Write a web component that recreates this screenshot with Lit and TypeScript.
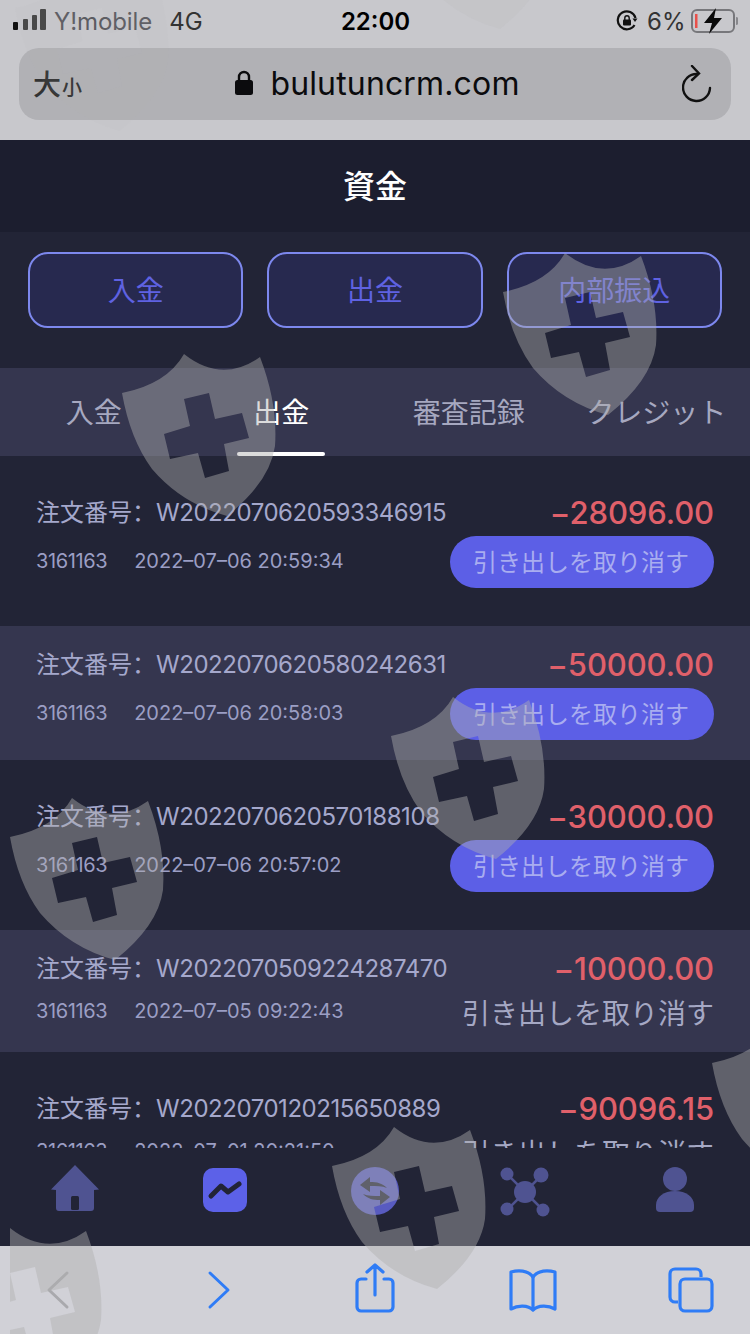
import { LitElement, css, html, svg } from "lit";

type Row = { no: string; time: string; amount: string; action: "button" | "text" };

const rows: Row[] = [
  { no: "W2022070620593346915", time: "2022–07–06 20:59:34", amount: "−28096.00", action: "button" },
  { no: "W2022070620580242631", time: "2022–07–06 20:58:03", amount: "−50000.00", action: "button" },
  { no: "W2022070620570188108", time: "2022–07–06 20:57:02", amount: "−30000.00", action: "button" },
  { no: "W2022070509224287470", time: "2022–07–05 09:22:43", amount: "−10000.00", action: "text" },
  { no: "W2022070120215650889", time: "2022–07–01 20:21:50", amount: "−90096.15", action: "text" },
];

const SHIELD =
  "M0 39Q45 30 62 0Q100 30 138 3Q156 50 153 92Q148 128 105 162Q60 150 30 115Q8 85 0 39Z" +
  "M62 45L87 39L93 65L120 59L127 84L102 90L107 117L83 124L76 99L48 105L42 80L68 72Z";

// watermark stamps: x, y, opacity
const stamps: [number, number, number][] = [
  [15, -31, 0.12],
  [395, -133, 0.25],
  [122, 354, 1],
  [503, 253, 1],
  [391, 697, 1],
  [10, 798, 1],
  [712, 1024, 1],
  [332, 1127, 1],
];

export class AppRoot extends LitElement {
  static styles = css`
    :host {
      display: block;
      position: relative;
      width: 750px;
      height: 1334px;
      overflow: hidden;
      background: #222436;
      font-family: "Inter", "Noto Sans CJK JP", sans-serif;
    }

    .page {
      display: flex;
      flex-direction: column;
      height: 100%;
    }

    /* browser chrome */
    .chrome {
      flex: none;
      height: 140px;
      box-sizing: border-box;
      background: #c8c8cc;
      padding: 0 19px;
    }

    .status {
      display: grid;
      grid-template-columns: 1fr auto 1fr;
      align-items: center;
      height: 42px;
      margin: 0 -7px 6px -6px;
      font-size: 24px;
      color: #333;
    }

    .status-left,
    .status-right {
      display: flex;
      align-items: center;
    }

    .status-right {
      justify-content: flex-end;
    }

    .carrier {
      margin-left: 7px;
      letter-spacing: -0.1px;
      color: #5c5c62;
    }

    .net {
      margin-left: 17px;
    }

    .clock {
      font-weight: 600;
      color: #000;
    }

    .pct {
      margin: 0 5px 0 9px;
      letter-spacing: 0.3px;
    }

    .url {
      display: grid;
      grid-template-columns: 1fr auto 1fr;
      align-items: center;
      height: 72px;
      padding: 0 19px 0 14px;
      border-radius: 20px;
      background: #b1b1b5;
    }

    .aa {
      color: #333;
      font-size: 28px;
      font-weight: 500;
      padding-bottom: 3px;
    }

    .aa small {
      font-size: 20px;
      margin-left: 1px;
    }

    .domain {
      display: flex;
      align-items: center;
      gap: 16px;
      margin-left: 9px;
      padding-bottom: 2px;
      font-size: 32px;
      letter-spacing: 0.15px;
      color: #0b0b0d;
    }

    .reload {
      justify-self: end;
    }

    /* app */
    .title {
      flex: none;
      height: 92px;
      box-sizing: border-box;
      padding-bottom: 5px;
      display: grid;
      place-items: center;
      background: #1c1e2f;
      color: #fff;
      font-size: 32px;
      font-weight: 500;
    }

    .actions {
      flex: none;
      display: grid;
      grid-template-columns: repeat(3, 1fr);
      gap: 24px;
      padding: 20px 28px 40px;
    }

    .action {
      height: 76px;
      box-sizing: border-box;
      padding-bottom: 2px;
      display: grid;
      place-items: center;
      border: 2px solid #7d88ee;
      border-radius: 20px;
      background: #27294f;
      color: #5f62e2;
      font-size: 28px;
    }

    .tabs {
      flex: none;
      display: grid;
      grid-template-columns: repeat(4, 1fr);
      height: 88px;
      background: #35364f;
    }

    .tab {
      position: relative;
      box-sizing: border-box;
      padding-bottom: 3px;
      display: grid;
      place-items: center;
      font-size: 28px;
      color: #a6a8c0;
      white-space: nowrap;
    }

    .tab.on {
      color: #fff;
    }

    .tab.on::after {
      content: "";
      position: absolute;
      left: 50%;
      bottom: 0;
      width: 88px;
      height: 4px;
      margin-left: -44px;
      border-radius: 2px;
      background: #fff;
    }

    .list {
      flex: 1;
      min-height: 0;
      overflow: hidden;
    }

    .row {
      display: grid;
      grid-template-columns: 1fr auto;
      grid-template-rows: 36px auto;
      row-gap: 6px;
      align-items: center;
      padding: 38px 36px 38px 36px;
    }

    .row:nth-child(even) {
      padding-top: 20px;
      padding-bottom: 20px;
      background: #35364f;
    }

    .order {
      display: flex;
      align-items: baseline;
      padding-bottom: 4px;
      font-size: 24px;
      color: #a5a8cc;
      white-space: nowrap;
    }

    .order .colon {
      font-family: "Noto Sans CJK SC", sans-serif;
    }

    .order .no {
      letter-spacing: -0.45px;
    }

    .amount {
      justify-self: end;
      font-size: 31px;
      font-weight: 500;
      letter-spacing: -0.1px;
      color: #e0606a;
    }

    .meta {
      display: flex;
      gap: 27px;
      padding-bottom: 2px;
      font-size: 20px;
      color: #9b9ec4;
    }

    .meta .id {
      letter-spacing: -0.4px;
    }

    .cancel {
      justify-self: end;
      height: 52px;
      width: 264px;
      box-sizing: border-box;
      padding: 0 2px 4px 0;
      display: grid;
      place-items: center;
      border-radius: 26px;
      background: #5c5fe6;
      color: #a9adf0;
      font-size: 24px;
    }

    .cancel.plain {
      height: 40px;
      width: auto;
      padding: 0 0 3px;
      background: none;
      color: #a5a8c4;
      font-size: 28px;
    }

    .nav {
      flex: none;
      height: 98px;
      display: grid;
      grid-template-columns: repeat(5, 150px);
      justify-items: center;
      padding-top: 16px;
      box-sizing: border-box;
      background: #222436;
    }

    .nav .raised {
      margin-top: 3px;
    }

    .toolbar {
      flex: none;
      height: 88px;
      display: flex;
      align-items: center;
      gap: 114.25px;
      padding-left: 36px;
      background: #d1d1d7;
    }

    .tool {
      width: 44px;
      display: grid;
      grid-template-columns: 44px;
      place-items: center;
    }

    .tool .share {
      margin-top: -4px;
    }

    .marks {
      position: absolute;
      inset: 0;
      pointer-events: none;
    }
  `;

  private renderStatus() {
    return html`
      <div class="status">
        <div class="status-left">
          <svg width="34" height="24" viewBox="0 0 34 24">
            <rect x="0" y="13" width="5" height="8" rx="1" fill="#111" />
            <rect x="10" y="10" width="5" height="11" rx="1" fill="#444" />
            <rect x="19" y="6" width="5" height="15" rx="1" fill="#444" />
            <rect x="27" y="0" width="6" height="21" rx="1" fill="#444" />
          </svg>
          <span class="carrier">Y!mobile</span>
          <span class="net">4G</span>
        </div>
        <div class="clock">22:00</div>
        <div class="status-right">
          <svg width="22" height="22" viewBox="0 0 22 22" fill="none" stroke="#111" stroke-width="2.2">
            <path d="M18.5 15A9 9 0 1 1 19.5 8" />
            <path d="M16.5 8.5h5l-2.5 3.5z" fill="#111" stroke="none" />
            <rect x="7" y="9.5" width="8" height="6" rx="1" fill="#111" stroke="none" />
            <path d="M8.8 10V8a2.2 2.2 0 0 1 4.4 0v2" stroke-width="1.4" />
          </svg>
          <span class="pct">6%</span>
          <svg width="47" height="26" viewBox="0 0 47 26" fill="none">
            <rect x="1" y="2" width="42" height="22" rx="5" stroke="#77777b" stroke-width="2" />
            <rect x="4" y="6" width="2.5" height="14" fill="#e8504a" />
            <path d="M45 9a3 4 0 0 1 0 8z" fill="#88888c" />
            <path d="M25 0L13 15h8l-3 11 13-16h-8z" fill="#0a0a0a" />
          </svg>
        </div>
      </div>
    `;
  }

  private renderUrl() {
    return html`
      <div class="url">
        <div class="aa">大<small>小</small></div>
        <div class="domain">
          <svg width="20" height="26" viewBox="0 0 20 26" fill="none">
            <path d="M5 11V7a5 5 0 0 1 10 0v4" stroke="#0b0b0d" stroke-width="2.4" />
            <rect x="1" y="10" width="18" height="15" rx="2.5" fill="#0b0b0d" />
          </svg>
          bulutuncrm.com
        </div>
        <svg class="reload" width="30" height="38" viewBox="0 0 30 38" fill="none" stroke="#111" stroke-width="2.4" stroke-linecap="round">
          <path d="M15 9A13.5 13.5 0 1 0 28 23" />
          <path d="M10 1l7 7.5-7 6.5" />
        </svg>
      </div>
    `;
  }

  private renderRow(r: Row) {
    return html`
      <div class="row">
        <div class="order"><span>注文番号<span class="colon">：</span></span><span class="no">${r.no}</span></div>
        <div class="amount">${r.amount}</div>
        <div class="meta"><span class="id">3161163</span><span>${r.time}</span></div>
        <div class="cancel ${r.action === "text" ? "plain" : ""}">引き出しを取り消す</div>
      </div>
    `;
  }

  private renderNav() {
    const c = "#4f5391";
    return html`
      <div class="nav">
        <svg width="50" height="48" viewBox="0 0 50 48">
          <path d="M25 1L49 25.5L44 26V44a3 3 0 0 1-3 3H9a3 3 0 0 1-3-3V26L1 25.5Z" fill=${c} />
          <rect x="21" y="32" width="8" height="14" rx="1.5" fill="#222436" />
        </svg>
        <svg class="raised" width="46" height="46" viewBox="0 0 46 46">
          <rect x="1" y="1" width="44" height="44" rx="10" fill="#5c61e8" />
          <path d="M9 29L19 19L26 25L37 17" fill="none" stroke="#222436" stroke-width="5" stroke-linecap="round" stroke-linejoin="round" />
        </svg>
        <svg class="raised" width="48" height="48" viewBox="0 0 48 48">
          <circle cx="24" cy="24" r="24" fill="#585bc0" />
          <path d="M9 18L19 10v5c7 0 12 1 17 6-5-2-10-2-17-2v6zM39 30L29 38v-5c-7 0-12-1-17-6 5 2 10 2 17 2v-6z" fill="#222436" />
        </svg>
        <svg class="raised" width="52" height="50" viewBox="0 0 52 50">
          <path d="M8 7L26 25L44 7M8 43L26 25L44 43" fill="none" stroke=${c} stroke-width="2.5" />
          <circle cx="26" cy="25" r="11" fill=${c} />
          <circle cx="8" cy="7" r="6.5" fill=${c} />
          <circle cx="42" cy="8" r="7.5" fill=${c} />
          <circle cx="8" cy="42" r="6.5" fill=${c} />
          <circle cx="44" cy="43" r="6.5" fill=${c} />
        </svg>
        <svg class="raised" width="40" height="46" viewBox="0 0 40 46">
          <circle cx="20" cy="12" r="12" fill=${c} />
          <path d="M1 38C1 30 9 24 20 24S39 30 39 38V41a4 4 0 0 1-4 4H5a4 4 0 0 1-4-4Z" fill=${c} />
        </svg>
      </div>
    `;
  }

  private renderToolbar() {
    const blue = "#2f7cf6";
    return html`
      <div class="toolbar">
        <div class="tool">
          <svg width="44" height="40" viewBox="0 0 44 40" fill="none" stroke="#a9a9ad" stroke-width="3" stroke-linecap="round" stroke-linejoin="round">
            <path d="M31 3L13 20L31 37" />
          </svg>
        </div>
        <div class="tool">
          <svg width="44" height="40" viewBox="0 0 44 40" fill="none" stroke=${blue} stroke-width="3" stroke-linecap="round" stroke-linejoin="round">
            <path d="M16 3L34 20L16 37" />
          </svg>
        </div>
        <div class="tool">
          <svg class="share" width="44" height="50" viewBox="0 0 44 50" fill="none" stroke=${blue} stroke-width="3.2" stroke-linecap="round" stroke-linejoin="round">
            <path d="M13 16H8a4 4 0 0 0-4 4V44a4 4 0 0 0 4 4H36a4 4 0 0 0 4-4V20a4 4 0 0 0-4-4H31" />
            <path d="M22 32V2M14 9L22 2L30 9" />
          </svg>
        </div>
        <div class="tool">
          <svg width="50" height="44" viewBox="0 0 50 44" fill="none" stroke=${blue} stroke-width="3.2" stroke-linejoin="round">
            <path d="M25 9C20 2 10 2 3 4V41C10 37 20 37 25 42C30 37 40 37 47 41V4C40 2 30 2 25 9Z" />
            <path d="M25 9V42" />
          </svg>
        </div>
        <div class="tool">
          <svg width="46" height="46" viewBox="0 0 46 46" fill="none" stroke=${blue} stroke-width="3.2" stroke-linejoin="round">
            <path d="M10 35H7a5 5 0 0 1-5-5V7a5 5 0 0 1 5-5H28a5 5 0 0 1 5 5v3" />
            <rect x="12" y="12" width="32" height="32" rx="5" />
          </svg>
        </div>
      </div>
    `;
  }

  private renderMarks() {
    return html`
      <svg class="marks" width="750" height="1334" viewBox="0 0 750 1334">
        <defs>
          <clipPath id="edge"><rect x="10" y="1200" width="740" height="134" /></clipPath>
        </defs>
        ${stamps.map(
          ([x, y, o]) => svg`<path d=${SHIELD} transform="translate(${x} ${y})" fill="#b0b0b0" fill-opacity=${0.44 * o} fill-rule="evenodd" />`
        )}
        <g clip-path="url(#edge)">
          <path d=${SHIELD} transform="translate(-52 1228)" fill="#b0b0b0" fill-opacity="0.44" fill-rule="evenodd" />
        </g>
      </svg>
    `;
  }

  protected override render() {
    return html`
      <div class="page">
        <div class="chrome">${this.renderStatus()} ${this.renderUrl()}</div>
        <div class="title">資金</div>
        <div class="actions">
          <div class="action">入金</div>
          <div class="action">出金</div>
          <div class="action">内部振込</div>
        </div>
        <div class="tabs">
          <div class="tab">入金</div>
          <div class="tab on">出金</div>
          <div class="tab">審査記録</div>
          <div class="tab">クレジット</div>
        </div>
        <div class="list">${rows.map((r) => this.renderRow(r))}</div>
        ${this.renderNav()} ${this.renderToolbar()}
      </div>
      ${this.renderMarks()}
    `;
  }
}

if (!customElements.get("app-root")) {
  customElements.define("app-root", AppRoot);
}
